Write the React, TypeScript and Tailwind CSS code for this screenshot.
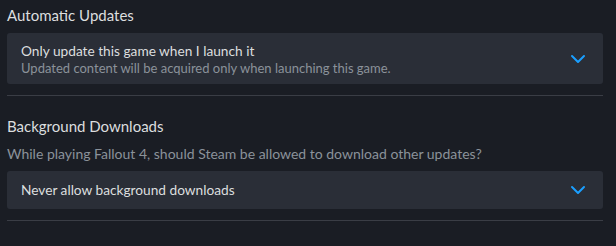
import { ChevronDown } from 'lucide-react';

interface DropdownProps {
  label: string;
  sub?: string;
}

function Dropdown({ label, sub }: DropdownProps) {
  return (
    <div
      className={`flex items-center justify-between rounded-[3px] bg-[#2a2e37] pl-[14px] pr-[13px] ${
        sub ? 'h-[51px]' : 'h-[38px]'
      }`}
    >
      <div className="flex flex-col">
        <span className="text-[13.7px] leading-[18px] text-[#dcdedf]">{label}</span>
        {sub && <span className="text-[13px] leading-[16px] text-[#8b929a]">{sub}</span>}
      </div>
      <ChevronDown size={24} strokeWidth={2} className="text-[#1a9fff]" />
    </div>
  );
}

export default function App() {
  return (
    <div
      className="h-[246px] w-[616px] bg-[#1a1d24] pl-[7px] pr-[13px] pt-[4px]"
      style={{ fontFamily: 'Lato, "Liberation Sans", Arial, sans-serif' }}
    >
      {/* Automatic updates */}
      <section className="border-b border-[#3a3d45] pb-[11px]">
        <h2 className="mb-[7px] text-[15px] leading-[22px] text-[#dcdedf]">Automatic Updates</h2>
        <Dropdown
          label="Only update this game when I launch it"
          sub="Updated content will be acquired only when launching this game."
        />
      </section>

      {/* Background downloads */}
      <section className="border-b border-[#3a3d45] pb-[11px] pt-[19px]">
        <h2 className="mb-[8px] text-[15px] leading-[22px] text-[#dcdedf]">Background Downloads</h2>
        <p className="mb-[8px] text-[14px] leading-[18px] text-[#8b929a]">
          While playing Fallout 4, should Steam be allowed to download other updates?
        </p>
        <Dropdown label="Never allow background downloads" />
      </section>
    </div>
  );
}
